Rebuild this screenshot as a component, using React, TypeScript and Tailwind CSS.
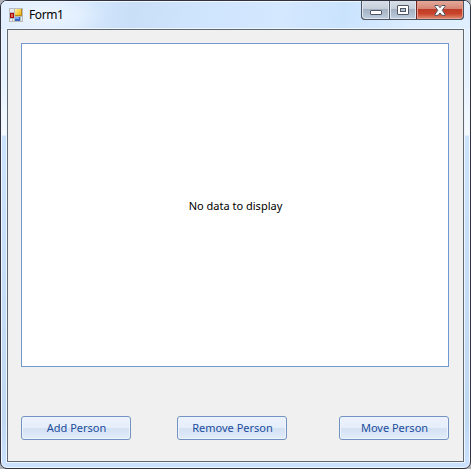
import React from "react";

function AppIcon() {
  return (
    <svg width="14" height="14" viewBox="0 0 14 14" shapeRendering="crispEdges" aria-hidden="true">
      <defs>
        <linearGradient id="gold" x1="0" y1="0" x2="1" y2="1">
          <stop offset="0" stopColor="#fff0a0" />
          <stop offset="1" stopColor="#edb208" />
        </linearGradient>
      </defs>
      <rect width="14" height="14" fill="#b9bbbd" />
      <rect x="1" y="1" width="4" height="3" fill="#e3e8ef" />
      <rect x="1" y="11" width="2" height="2" fill="#e9eef5" />
      <rect x="4" y="11" width="1" height="2" fill="#e9eef5" />
      <rect x="12" y="9" width="1" height="4" fill="#e3e8ef" />
      <rect x="6" y="1" width="7" height="7" fill="#b98a16" />
      <rect x="6" y="1" width="6" height="6" fill="url(#gold)" />
      <rect x="1" y="5" width="4" height="5" fill="#a80d0d" />
      <rect x="2" y="6" width="2" height="3" fill="#df6454" />
      <rect x="6" y="9" width="5" height="4" fill="#3467c5" />
      <rect x="6" y="9" width="4" height="2" fill="#78a9f1" />
    </svg>
  );
}

function CaptionButtons() {
  return (
    <div className="flex h-[19px] w-[103px] overflow-hidden rounded-b-[4px] border border-t-0 border-[#4b5564] bg-[#4b5564]">
      <button aria-label="Minimize" className="flex w-[27px] items-center justify-center rounded-bl-[3px] border border-t-0 border-[#e0e7f0] bg-[linear-gradient(#d8dfe8_0%,#c4cdd9_48%,#a3b1c2_50%,#bccbdc_100%)]">
        <svg width="12" height="5" viewBox="0 0 12 5" className="mt-[5px]">
          <rect x=".5" y=".5" width="11" height="4" rx=".5" fill="#fff" stroke="#4f5665" />
        </svg>
      </button>
      <button aria-label="Maximize" className="ml-px flex w-[26px] items-center justify-center border border-t-0 border-[#e0e7f0] bg-[linear-gradient(#d8dfe8_0%,#c4cdd9_48%,#a3b1c2_50%,#bccbdc_100%)]">
        <svg width="12" height="10" viewBox="0 0 12 10" className="mt-px">
          <rect x=".5" y=".5" width="11" height="9" rx=".5" fill="#fff" stroke="#4f5665" />
          <rect x="3.5" y="3.5" width="5" height="3" fill="#b7c4d2" stroke="#4f5665" />
        </svg>
      </button>
      <button aria-label="Close" className="ml-px flex w-[46px] items-center justify-center rounded-br-[3px] border border-t-0 border-[#e79b8b] bg-[linear-gradient(#e4a99b_0%,#d68573_46%,#bf3c27_50%,#c9442c_75%,#dc8266_100%)] shadow-[-1px_0_#6d2524]">
        <svg width="12" height="11" viewBox="0 0 12 11" className="mt-px">
          <path d="M1 .5H4.2L6 2.7L7.8 .5H11V1.5L8.2 5.3L11 9.2V10.3H7.8L6 7.9L4.2 10.3H1V9.2L3.8 5.3L1 1.5Z" fill="#fff" stroke="#535563" strokeLinejoin="round" />
        </svg>
      </button>
    </div>
  );
}

function ActionButton({ label }: { label: string }) {
  return (
    <button className="flex h-6 w-[110px] items-center justify-center rounded-[3px] border border-[#7293c2] bg-[linear-gradient(#ebf2fc_0%,#e6eefa_48%,#d4e1f4_52%,#e3edf8_100%)] pl-px text-[11px] leading-4 text-[#204d9c] shadow-[inset_0_0_0_1px_#edf4fd]">
      {label}
    </button>
  );
}

export default function App() {
  return (
    <div className="h-[469px] w-[471px] bg-[#aeb2b8] font-['Noto_Sans','Open_Sans',sans-serif]">
      <div className="flex h-full flex-col overflow-hidden rounded-[7px] border border-[#30323f] bg-[linear-gradient(#e5f1ff_0px,#e3f0ff_70px,#f5faff_134px,#cce3fd_135px,#bfd8f2_420px,#cae2ff_100%)] shadow-[inset_0_0_0_1px_#f0f7ff]">
        <header className="flex h-[28px] shrink-0 items-start bg-[radial-gradient(ellipse_60px_24px_at_44px_14px,#f1f7ffee_0%,#e9f3ffaa_55%,transparent_100%),linear-gradient(100deg,#deedff_0%,#d5e8fd_18%,#c9dff8_28%,#cee4fd_40%,#d4e8ff_60%,#cae3fd_73%,#dcedff_88%,#e0efff_100%)] pl-2 pr-[6px] shadow-[inset_0_1px_#f0f7ff]">
          <div className="mt-[7px]"><AppIcon /></div>
          <h1 className="ml-[6px] mt-[5px] text-[12px] leading-[18px] font-normal tracking-[-0.4px] text-black">Form1</h1>
          <div className="ml-auto"><CaptionButtons /></div>
        </header>
        <main className="mx-[6px] flex h-[433px] w-[457px] shrink-0 flex-col border border-[#606872] bg-[#f0f0f0] px-[13px] pt-[13px] shadow-[0_0_0_1px_#eff6ff]">
          <section className="flex h-[324px] w-[428px] items-center justify-center border border-[#7199cf] bg-white pl-px pt-[2px] text-[11px] leading-4 text-black">
            <span>No data to display</span>
          </section>
          <footer className="mt-[49px] flex w-[428px]">
            <ActionButton label="Add Person" />
            <div className="ml-[46px]"><ActionButton label="Remove Person" /></div>
            <div className="ml-[52px]"><ActionButton label="Move Person" /></div>
          </footer>
        </main>
      </div>
    </div>
  );
}
